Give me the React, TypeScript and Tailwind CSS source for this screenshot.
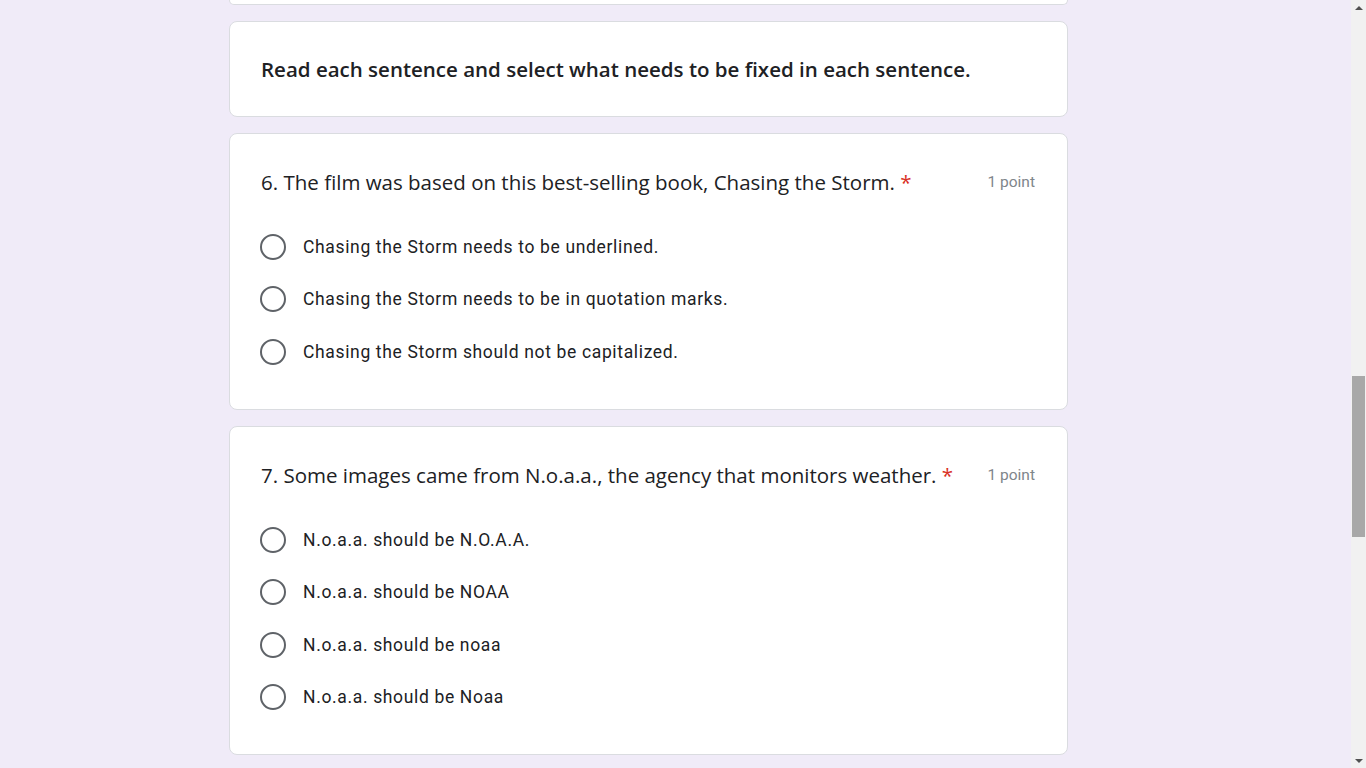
const TITLE_FONT = "font-['Open_Sans',Roboto,sans-serif]";

type Question = {
  title: string;
  options: string[];
};

const questions: Question[] = [
  {
    title: "6. The film was based on this best-selling book, Chasing the Storm.",
    options: [
      "Chasing the Storm needs to be underlined.",
      "Chasing the Storm needs to be in quotation marks.",
      "Chasing the Storm should not be capitalized.",
    ],
  },
  {
    title: "7. Some images came from N.o.a.a., the agency that monitors weather.",
    options: [
      "N.o.a.a. should be N.O.A.A.",
      "N.o.a.a. should be NOAA",
      "N.o.a.a. should be noaa",
      "N.o.a.a. should be Noaa",
    ],
  },
];

function Radio({ label }: { label: string }) {
  return (
    <label className="flex items-center h-[52.3px] cursor-pointer">
      <span className="-ml-[1px] w-[26px] h-[26px] rounded-full border-2 border-[#5f6368] shrink-0" />
      <span className="ml-[17px] text-[17.5px] tracking-[0.65px] text-[#202124] font-['Roboto',sans-serif]">
        {label}
      </span>
    </label>
  );
}

function QuestionCard({ q }: { q: Question }) {
  return (
    <div className="bg-white border border-[#dadce0] rounded-lg pl-[31px] pr-[32px] pt-[35px] pb-[31px]">
      <div className="flex items-center justify-between h-[26px]">
        <div className={`text-[20.5px] text-[#202124] ${TITLE_FONT}`}>
          {q.title} <span className="text-[#d93025]">*</span>
        </div>
        <div className="pt-[2px] text-[15.5px] text-[#80868b] font-['Roboto',sans-serif]">1 point</div>
      </div>
      <div className="mt-[26px] flex flex-col">
        {q.options.map((o) => (
          <Radio key={o} label={o} />
        ))}
      </div>
    </div>
  );
}

function Scrollbar() {
  return (
    <div className="w-[15px] h-full bg-[#f1f1f1] flex flex-col items-center relative">
      <div className="h-[15px] flex items-center justify-center">
        <div className="w-0 h-0 border-l-[4px] border-r-[4px] border-b-[4px] border-l-transparent border-r-transparent border-b-[#505050]" />
      </div>
      <div className="flex-1 w-full px-[1px]">
        <div className="mt-[361px] h-[161px] bg-[#a8a8a8]" />
      </div>
      <div className="h-[15px] flex items-center justify-center">
        <div className="w-0 h-0 border-l-[4px] border-r-[4px] border-t-[4px] border-l-transparent border-r-transparent border-t-[#505050]" />
      </div>
    </div>
  );
}

export default function App() {
  return (
    <div className="flex w-full h-screen overflow-hidden bg-[#f0ebf8]">
      <div className="flex-1 overflow-hidden">
        <div className="ml-[229px] w-[839px] flex flex-col gap-[16px]">
          <div className="h-[5px] bg-white border border-t-0 border-[#dadce0] rounded-b-lg" />
          <div className="bg-white border border-[#dadce0] rounded-lg pl-[31px] pt-[35px] pb-[35px]">
            <div className={`text-[20.5px] leading-[24px] font-semibold text-[#202124] ${TITLE_FONT}`}>
              Read each sentence and select what needs to be fixed in each sentence.
            </div>
          </div>
          {questions.map((q) => (
            <QuestionCard key={q.title} q={q} />
          ))}
        </div>
      </div>
      <Scrollbar />
    </div>
  );
}
